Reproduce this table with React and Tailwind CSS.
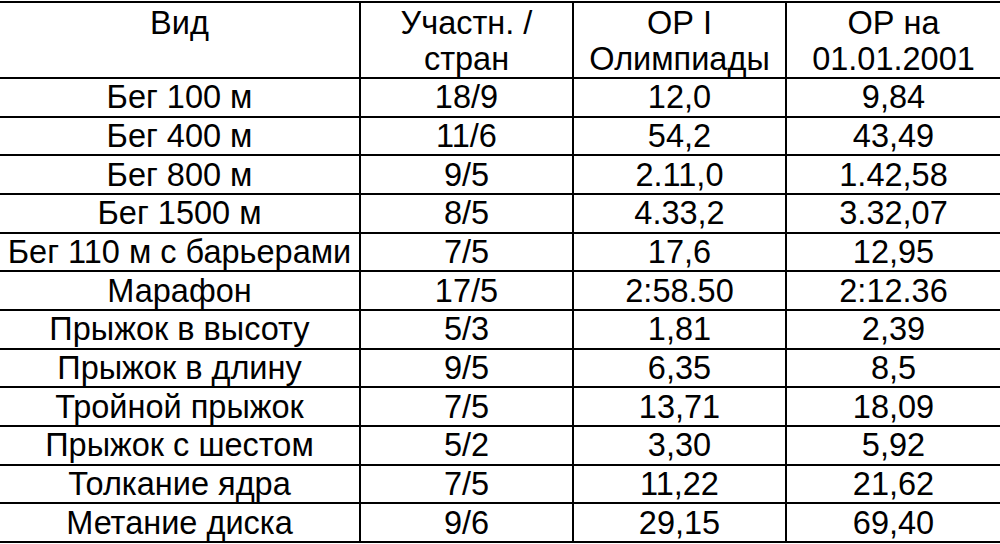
const rows = [
  ["Бег 100 м", "18/9", "12,0", "9,84"],
  ["Бег 400 м", "11/6", "54,2", "43,49"],
  ["Бег 800 м", "9/5", "2.11,0", "1.42,58"],
  ["Бег 1500 м", "8/5", "4.33,2", "3.32,07"],
  ["Бег 110 м с барьерами", "7/5", "17,6", "12,95"],
  ["Марафон", "17/5", "2:58.50", "2:12.36"],
  ["Прыжок в высоту", "5/3", "1,81", "2,39"],
  ["Прыжок в длину", "9/5", "6,35", "8,5"],
  ["Тройной прыжок", "7/5", "13,71", "18,09"],
  ["Прыжок с шестом", "5/2", "3,30", "5,92"],
  ["Толкание ядра", "7/5", "11,22", "21,62"],
  ["Метание диска", "9/6", "29,15", "69,40"],
];

export default function App() {
  return (
    <div className="w-[1000px] h-[544px] bg-white text-black pt-px font-['Liberation_Sans',Arial,sans-serif] overflow-hidden">
      <table className="w-[1000px] border-collapse table-fixed text-[32.5px] leading-[36px]">
        <colgroup>
          <col className="w-[360px]" />
          <col className="w-[213px]" />
          <col className="w-[213px]" />
          <col className="w-[214px]" />
        </colgroup>
        <thead>
          <tr className="h-[76px] border-y-2 border-black">
            <th className="font-normal align-top pt-[2px] border-r-2 border-black">Вид</th>
            <th className="font-normal align-top pt-[2px] border-r-2 border-black">
              Участн. /<br />стран
            </th>
            <th className="font-normal align-top pt-[2px] border-r-2 border-black">
              ОР I<br />Олимпиады
            </th>
            <th className="font-normal align-top pt-[2px]">
              ОР на<br />01.01.2001
            </th>
          </tr>
        </thead>
        <tbody>
          {rows.map((r) => (
            <tr key={r[0]} className="h-[38.67px] border-b-2 border-black">
              <td className="text-center p-0 border-r-2 border-black">{r[0]}</td>
              <td className="text-center p-0 border-r-2 border-black">{r[1]}</td>
              <td className="text-center p-0 border-r-2 border-black">{r[2]}</td>
              <td className="text-center p-0">{r[3]}</td>
            </tr>
          ))}
        </tbody>
      </table>
    </div>
  );
}
